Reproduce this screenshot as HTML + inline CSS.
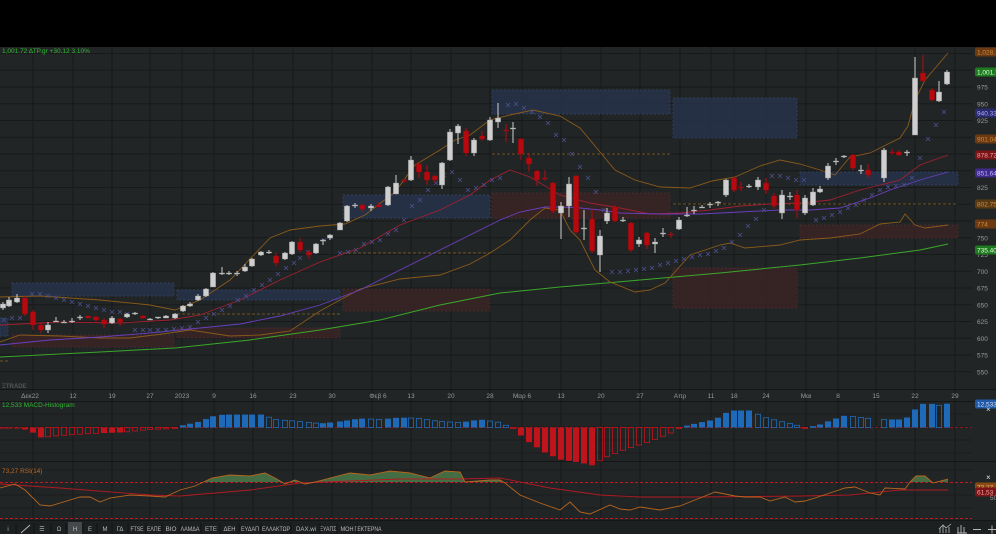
<!DOCTYPE html>
<html><head><meta charset="utf-8">
<style>
html,body{margin:0;padding:0;background:#000;}
body{width:996px;height:534px;overflow:hidden;position:relative;font-family:"Liberation Sans",sans-serif;}
svg{position:absolute;left:0;top:0;}
</style></head>
<body>
<svg id="s" width="996" height="534" viewBox="0 0 996 534" xmlns="http://www.w3.org/2000/svg" font-family="Liberation Sans, sans-serif">
<rect x="0" y="0" width="996" height="47" fill="#000"/>
<rect x="0" y="47" width="996" height="487" fill="#222526"/>
<g id="grid"></g>
<g id="zones"></g>
<g id="lines"></g>
<g id="candles"></g>
<g id="macd"></g>
<g id="rsi"></g>
<g id="labels"></g>
<text x="2" y="53" font-size="6.5" fill="#2fb82f">1,001.72 ΔΤΡ.gr +30.12 3.10%</text>
<text x="2" y="388" font-size="6" fill="#555" font-weight="bold">ΞTRADE</text>
<text x="2" y="407" font-size="6.5" fill="#2fb82f">12,533 MACD-Histogram</text>
<text x="2" y="473" font-size="6.5" fill="#c06a20">73,27 RSI(14)</text>
<g id="tb"></g>
</svg>
<script>
const NS="http://www.w3.org/2000/svg";
function el(p,t,a,txt){const e=document.createElementNS(NS,t);for(const k in a)e.setAttribute(k,a[k]);if(txt!==undefined)e.textContent=txt;document.getElementById(p).appendChild(e);return e;}
const py=p=>87+(975-p)*0.67;
const vx=[33,73,112,150,182,214,253,293,332,372,411,451,490,522,561,601,640,680,711,734,766,806,838,876,915,955];
vx.forEach(x=>el('grid','line',{x1:x,y1:47,x2:x,y2:520,stroke:'#17191a','stroke-width':1}));
for(let p=1025;p>=550;p-=25){const y=py(p);el('grid','line',{x1:0,y1:y,x2:972,y2:y,stroke:'#17191a','stroke-width':1});}
for(let y=414;y<460;y+=13)el('grid','line',{x1:0,y1:y,x2:972,y2:y,stroke:'#1a1c1d'});
[470,495,508].forEach(y=>el('grid','line',{x1:0,y1:y,x2:972,y2:y,stroke:'#1a1c1d'}));
el('grid','line',{x1:0,y1:389.5,x2:996,y2:389.5,stroke:'#141617'});
el('grid','line',{x1:0,y1:401.5,x2:996,y2:401.5,stroke:'#141617'});
el('grid','line',{x1:0,y1:461.5,x2:996,y2:461.5,stroke:'#141617'});
el('grid','line',{x1:0,y1:520.5,x2:996,y2:520.5,stroke:'#141617'});
el('grid','rect',{x:0,y:521,width:996,height:13,fill:'#1d2021'});
const dl=[[30,'Δεκ22'],[73,'12'],[112,'19'],[150,'27'],[182,'2023'],[214,'9'],[253,'16'],[293,'23'],[332,'30'],[378,'Φεβ 6'],[411,'13'],[451,'20'],[490,'28'],[522,'Μαρ 6'],[561,'13'],[601,'20'],[640,'27'],[680,'Απρ'],[711,'11'],[734,'18'],[766,'24'],[806,'Μαι'],[838,'8'],[876,'15'],[915,'22'],[955,'29']];
dl.forEach(d=>el('labels','text',{x:d[0],y:398,'font-size':6.5,fill:'#999','text-anchor':'middle'},d[1]));
const bz=[[12,283,174,296],[177,290,340,300],[343,195,490,218],[492,90,670,114],[673,98,797,138],[800,172,958,185],[0,318,8,336]];
const rz=[[12,335,174,347],[177,328,340,338],[343,289,490,311],[492,193,670,218],[673,268,797,308],[800,225,958,238]];
bz.forEach(z=>el('zones','rect',{x:z[0],y:z[1],width:z[2]-z[0],height:z[3]-z[1],fill:'#27324a','fill-opacity':0.85,stroke:'#34456a','stroke-dasharray':'2,2','stroke-width':0.7}));
rz.forEach(z=>el('zones','rect',{x:z[0],y:z[1],width:z[2]-z[0],height:z[3]-z[1],fill:'#3a2426','fill-opacity':0.85,stroke:'#4e2c2e','stroke-dasharray':'2,2','stroke-width':0.7}));
[[177,314,340],[343,253,490],[492,154,670],[673,204,958],[0,361,8]].forEach(l=>el('zones','line',{x1:l[0],y1:l[1],x2:l[2],y2:l[1],stroke:'#8a6420','stroke-dasharray':'3,2','stroke-width':0.8}));
function pl(g,pts,c,w){el(g,'polyline',{points:pts.map(p=>p.join(',')).join(' '),fill:'none',stroke:c,'stroke-width':w||0.9});}
pl('lines',[[0,357],[100,352],[175,348],[250,340],[320,330],[380,320],[440,305],[500,293],[560,287],[640,280],[720,273],[800,265],[860,258],[920,250],[948,244]],'#3aa82a',1);
pl('lines',[[0,297],[40,296],[100,300],[150,305],[175,310],[200,300],[230,280],[270,238],[290,230],[320,226],[345,224],[365,215],[395,192],[415,165],[440,150],[455,140],[470,135],[490,120],[510,115],[533,110],[560,116],[580,128],[600,152],[615,170],[635,180],[660,187],[690,188],[712,181],[735,177],[760,166],[780,160],[800,164],[820,170],[835,175],[850,157],[870,153],[890,143],[900,138],[908,126],[915,100],[925,80],[948,53]],'#8a5a1a');
pl('lines',[[0,342],[20,335],[60,336],[100,338],[130,338],[170,333],[190,330],[230,336],[260,335],[290,331],[320,311],[360,289],[400,279],[440,275],[470,264],[490,253],[510,240],[530,220],[545,208],[560,210],[570,230],[580,240],[595,270],[610,282],[635,292],[650,290],[665,283],[690,255],[720,245],[730,243],[745,248],[780,245],[800,240],[830,238],[860,234],[880,224],[900,222],[905,214],[915,225],[925,228],[948,225]],'#8a5a1a');
pl('lines',[[0,325],[60,322],[120,323],[170,320],[200,315],[240,300],[280,280],[320,262],[360,248],[400,225],[440,210],[470,195],[490,180],[510,170],[530,177],[560,195],[590,203],[620,208],[650,214],[680,213],[710,210],[740,206],[770,204],[800,203],[830,200],[860,190],[880,185],[900,180],[920,165],[948,155]],'#a02030');
pl('lines',[[0,345],[50,340],[100,337],[150,333],[200,328],[240,324],[280,316],[320,305],[360,290],[400,270],[440,250],[480,230],[500,220],[520,212],[545,207],[560,207],[580,208],[600,210],[620,213],[660,214],[700,214],[740,212],[780,210],[810,210],[840,208],[870,198],[890,190],[920,180],[948,172]],'#6a3fc0');
const sar=[[4,320],[12,318],[20,318],[32,294],[40,294],[48,296],[56,298],[64,300],[72,302],[80,304],[88,306],[96,308],[104,310],[112,312],[120,312],[127,314],[135,330],[143,330],[150,330],[158,330],[166,330],[174,329],[182,328],[190,327],[198,322],[206,318],[214,314],[222,310],[230,306],[238,300],[246,296],[254,290],[262,285],[270,280],[278,274],[286,268],[294,263],[300,258],[308,252],[316,246],[324,240],[331,237],[340,253],[348,252],[356,250],[364,244],[372,242],[380,240],[388,234],[396,230],[404,220],[412,206],[420,200],[428,190],[436,183],[444,175],[452,172],[460,180],[468,190],[476,188],[484,185],[492,180],[500,178],[508,105],[516,104],[524,108],[532,112],[540,117],[548,123],[556,135],[564,140],[572,154],[580,167],[588,178],[596,192],[604,210],[612,272],[620,272],[628,271],[636,270],[644,269],[652,268],[660,265],[668,263],[676,261],[684,259],[692,257],[700,255],[708,254],[716,251],[724,248],[732,242],[740,235],[748,226],[756,219],[764,210],[772,176],[780,176],[788,178],[796,180],[804,180],[816,220],[824,218],[832,215],[840,212],[848,208],[856,205],[864,200],[872,195],[880,190],[888,187],[896,186],[904,185],[912,178],[920,158],[928,139],[936,125],[944,112]];
sar.forEach(s=>{el('lines','path',{d:`M${s[0]-2},${s[1]-2}L${s[0]+2},${s[1]+2}M${s[0]+2},${s[1]-2}L${s[0]-2},${s[1]+2}`,stroke:'#4b4f8e','stroke-width':0.8});});
const C=[[3,308,304,302,310],[9,306,300,297,307],[17,302,298,294,303],[25,298,314,296,316],[33,312,325,310,330],[41,325,330,322,333],[48,330,325,322,333],[56,321,321,317,322],[64,322,322,320,323],[72,321,321,318,323],[80,318,317,315,320],[88,316,318,316,318],[96,317,320,316,322],[104,320,324,318,328],[112,323,318,316,324],[120,319,322,318,326],[127,317,314,313,318],[135,314,313,312,315],[143,316,318,315,319],[150,319,319,318,320],[158,318,317,317,319],[166,318,316,315,318],[175,318,314,313,319],[183,311,306,305,312],[190,306,304,302,307],[198,300,296,294,301],[206,296,289,288,297],[213,287,273,272,287],[222,273,273,267,275],[229,273,273,271,275],[237,274,273,271,276],[245,271,267,264,272],[252,266,259,258,267],[261,255,252,251,256],[269,253,252,250,254],[276,256,263,253,266],[285,259,253,252,260],[292,254,242,241,255],[300,242,250,238,252],[309,252,255,250,259],[316,253,244,243,254],[323,241,240,239,245],[330,238,235,234,240],[340,230,223,222,230],[347,221,206,205,222],[355,206,205,203,208],[362,205,209,204,212],[371,208,206,204,211],[379,205,207,202,207],[388,205,187,186,206],[396,194,183,175,194],[404,180,181,179,183],[411,180,160,156,181],[419,164,172,162,178],[427,172,180,165,185],[435,176,180,175,183],[442,185,163,162,189],[450,160,132,129,161],[458,133,126,124,144],[466,131,153,128,156],[474,153,140,138,156],[482,136,139,131,141],[490,140,120,117,141],[498,122,118,103,128],[506,130,131,124,142],[513,128,128,122,143],[521,139,154,138,160],[529,158,164,153,172],[537,171,180,170,186],[545,178,179,170,181],[553,183,211,182,213],[561,213,206,202,239],[569,206,184,177,217],[576,176,232,175,234],[584,228,228,210,240],[592,219,251,209,253],[600,255,236,230,272],[607,221,213,208,224],[615,207,221,205,222],[623,220,220,217,222],[631,223,250,222,252],[639,244,240,237,247],[647,233,245,232,249],[655,244,242,238,253],[663,234,233,228,237],[671,234,235,232,238],[679,229,220,217,230],[687,215,215,207,217],[694,210,210,206,214],[702,207,207,205,208],[710,205,204,202,208],[718,203,202,201,206],[726,195,180,179,197],[734,178,190,177,192],[741,187,188,182,191],[749,187,186,184,188],[758,187,180,177,190],[766,183,190,178,194],[774,196,206,193,209],[782,213,195,190,219],[790,196,196,192,200],[797,195,210,190,218],[805,213,198,195,215],[813,205,192,188,206],[820,192,189,186,193],[828,178,166,163,180],[836,161,161,158,165],[844,157,156,155,158],[853,155,168,154,170],[861,170,170,165,174],[868,170,175,164,178],[884,178,150,148,182],[892,152,153,149,155],[899,152,155,150,156],[907,153,152,150,156],[915,135,78,57,135],[923,73,81,55,81],[932,90,100,88,101],[939,101,92,81,102],[947,84,72,70,85]];
C.forEach(c=>{const[x,o,cl,h,l]=c;const red=cl>o;const col=red?'#b8090f':'#cfcfcf';
el('candles','line',{x1:x,y1:h,x2:x,y2:l,stroke:col,'stroke-width':1});
const t=Math.min(o,cl),bh=Math.max(1,Math.abs(cl-o));
el('candles','rect',{x:x-2.6,y:t,width:5.2,height:bh,fill:col,stroke:red?'#8a0a0e':'#9a9a9a','stroke-width':0.4});});
const mk=[[0,-1],[20,-1],[30,-3],[40,-10],[60,-8],[90,-6],[120,-5],[150,-2],[175,-1],[182,2],[200,6],[215,12],[225,13],[262,13],[275,8],[300,6],[320,4],[340,6],[360,9],[380,8],[400,10],[420,9],[440,6],[460,5],[480,8],[500,5],[515,-2],[525,-12],[545,-25],[560,-32],[580,-35],[593,-38],[605,-30],[625,-22],[650,-14],[670,-6],[683,1],[700,5],[715,8],[730,17],[750,17],[765,10],[785,5],[795,3],[805,-1],[815,1],[830,7],[845,12],[860,10],[880,8],[905,8],[915,18],[925,25],[940,22],[948,24]];
function interp(arr,x){for(let i=0;i<arr.length-1;i++){if(x>=arr[i][0]&&x<=arr[i+1][0]){const f=(x-arr[i][0])/(arr[i+1][0]-arr[i][0]);return arr[i][1]+f*(arr[i+1][1]-arr[i][1]);}}return arr[arr.length-1][1];}
el('macd','line',{x1:0,y1:427.5,x2:972,y2:427.5,stroke:'#b8141c','stroke-dasharray':'3,2','stroke-width':0.8});
let prev=0;
C.forEach(c=>{const x=c[0];const v=interp(mk,x);const pos=v>=0;const col=pos?'#1e6ab8':'#c0141c';
const hollow=Math.abs(v)<Math.abs(prev)-0.3;prev=v;const h=Math.max(1,Math.abs(v));
const y=pos?427.5-h:427.5;
if(hollow)el('macd','rect',{x:x-2.6,y:y,width:5.2,height:h,fill:'none',stroke:col,'stroke-width':0.8});
else el('macd','rect',{x:x-3,y:y,width:6,height:h,fill:col});});
const r=[[0,488],[15,484],[25,490],[40,505],[50,506],[70,500],[80,497],[90,497],[100,502],[110,498],[130,495],[150,496],[165,497],[180,490],[195,486],[212,478],[230,475],[250,476],[265,473],[275,478],[285,484],[295,480],[305,484],[315,482],[330,478],[350,473],[370,475],[390,471],[410,473],[430,478],[445,471],[460,472],[465,482],[490,480],[500,480],[505,483],[520,495],[540,503],[560,510],[570,502],[580,512],[590,514],[610,505],[620,509],[630,510],[640,507],[660,510],[680,506],[700,498],[715,492],[735,496],[745,497],[760,497],[770,501],[785,497],[795,502],[805,501],[815,498],[830,493],[845,488],[855,487],[870,493],[880,495],[885,488],[905,489],[910,482],[916,476],[925,476],[933,483],[948,479]];
let fp='M0,482';for(let x=0;x<=948;x+=1){const y=Math.min(482,interp(r,x));fp+=`L${x},${y}`;}fp+='L948,482Z';
el('rsi','path',{d:fp,fill:'#4a7a4a','fill-opacity':0.85});
el('rsi','line',{x1:0,y1:482.5,x2:972,y2:482.5,stroke:'#c01820','stroke-dasharray':'3,2','stroke-width':0.9});
el('rsi','line',{x1:0,y1:518.5,x2:972,y2:518.5,stroke:'#c01820','stroke-dasharray':'3,2','stroke-width':0.9});
pl('rsi',[[0,484],[60,488],[150,495],[180,496],[250,490],[300,483],[400,479],[460,479],[500,478],[550,488],[600,495],[640,497],[700,497],[800,496],[850,495],[900,490],[948,490]],'#b01a22',0.9);
pl('rsi',r,'#b8661e',0.9);
function lab(y,t,bg,fg){if(bg){el('labels','rect',{x:975,y:y-4.5,width:23,height:9,rx:2,fill:bg});}el('labels','text',{x:977,y:y+2.5,'font-size':6.5,fill:fg||'#999'},t);}
[[975],[950],[925],[825],[750],[725],[700],[675],[650],[625],[600],[575],[550]].forEach(p=>lab(py(p[0]),String(p[0])));
lab(52,'1,028.1','#6b3a12','#d08a40');
lab(72,'1,001.72','#1e7a1e','#e0ffe0');
lab(113,'940.33','#2a2a6e','#b0b0ff');
lab(139,'901.04','#6b3a12','#d08a40');
lab(155,'878.72','#7a1418','#f0a0a0');
lab(173,'851.64','#3e2a8a','#c0b0ff');
lab(204,'802.75','#5a3a14','#d08a40');
lab(224,'774','#6b3a12','#d08a40');
lab(250,'735.40','#1e7a1e','#e0ffe0');
lab(404,'12,533','#1e5aa8','#dde');
lab(487,'73,27','#8a4a14','#f0b080');
lab(492,'61,53','#7a1418','#f0a0a0');
el('labels','text',{x:990,y:500,'font-size':6.5,fill:'#999'},'50');
el('labels','text',{x:986,y:412,'font-size':8,fill:'#ddd'},'×');
el('labels','text',{x:986,y:480,'font-size':8,fill:'#ddd'},'×');
// toolbar: [center, label, width]
const tb=[[8,'i'],[42,'☰'],[59,'Ω'],[75,'Η'],[90,'Ε'],[105,'Μ'],[120,'ΓΔ',0],[137,'FTSE',13],[154,'ΕΛΠΕ',14],[171,'ΒΙΟ',11],[190,'ΛΑΜΔΑ',19],[211,'ΕΤΕ',12],[229.5,'ΔΕΗ',12],[250,'ΕΥΔΑΠ',18],[276,'ΕΛΛΑΚΤΩΡ',28],[306,'DAX.wi',20],[328,'ΕΥΑΠΣ',17],[347,'ΜΟΗ',13],[368,'ΓΕΚΤΕΡΝΑ',27]];
el('tb','rect',{x:68,y:522,width:14,height:12,fill:'#45494b'});
el('tb','line',{x1:21,y1:533,x2:30,y2:525,stroke:'#bbb','stroke-width':0.9});
tb.forEach(t=>{const a={x:t[0],y:531,'font-size':6,fill:'#bbb','text-anchor':'middle'};if(t[2]){a.textLength=t[2];a.lengthAdjust='spacingAndGlyphs';}el('tb','text',a,t[1]);});
[16,34,51,66,83,97,112,128,146,162,180,201,220,239,261,291,320,337,357].forEach(x=>el('tb','line',{x1:x,y1:523,x2:x,y2:534,stroke:'#121414'}));
el('tb','path',{d:'M940,533V528M943,533V526M946,533V529M949,533V527M939,529L943,525L946,528L951,524',stroke:'#bbb',fill:'none','stroke-width':0.8});
el('tb','path',{d:'M958,533V527M961,533V525M964,533V527M957,533H967',stroke:'#bbb',fill:'none','stroke-width':0.9});
el('tb','path',{d:'M973,529.5H981M988,529.5H996M992,525.5V533.5',stroke:'#bbb',fill:'none','stroke-width':0.9});
</script>
</body></html>
